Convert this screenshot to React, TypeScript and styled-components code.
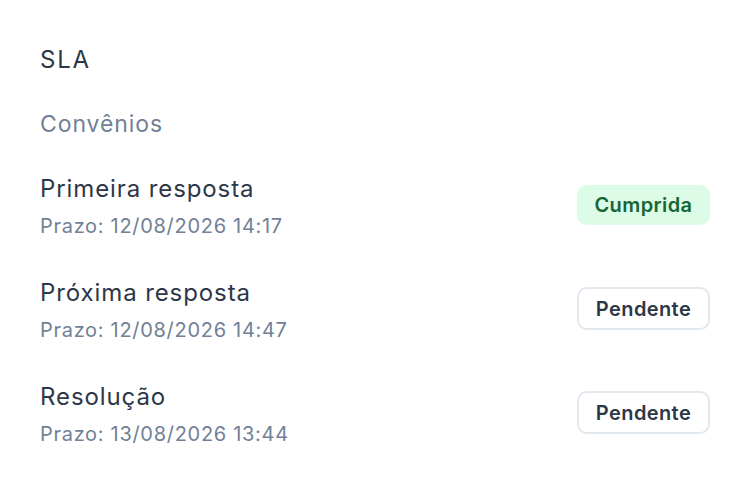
import React from 'react';
import styled, { createGlobalStyle } from 'styled-components';

const GlobalStyle = createGlobalStyle`
    html, body {
        margin: 0;
        padding: 0;
        background: #ffffff;
    }
    body {
        font-family: Inter, "Noto Sans", sans-serif;
        -webkit-font-smoothing: antialiased;
    }
`;

const Panel = styled.section`
    box-sizing: border-box;
    width: 750px;
    height: 504px;
    padding: 44px 40px 0 40px;
    background: #ffffff;
    display: flex;
    flex-direction: column;
`;

const Title = styled.h2`
    margin: 0;
    font-family: Inter, sans-serif;
    font-size: 24px;
    line-height: 32px;
    font-weight: 400;
    letter-spacing: 1.8px;
    color: #2d3748;
`;

const Group = styled.div`
    margin-top: 33px;
    font-family: Inter, sans-serif;
    font-size: 23px;
    line-height: 30px;
    letter-spacing: 0.9px;
    color: #718096;
`;

const List = styled.div`
    margin-top: 33px;
    display: flex;
    flex-direction: column;
    gap: 36px;
`;

const Row = styled.div`
    display: flex;
    align-items: center;
    justify-content: space-between;
`;

const Info = styled.div`
    display: flex;
    flex-direction: column;
    gap: 6px;
`;

const Name = styled.div`
    font-family: Inter, sans-serif;
    font-size: 24px;
    line-height: 34px;
    letter-spacing: 0.9px;
    color: #2d3748;
`;

const Deadline = styled.div`
    font-family: Inter, sans-serif;
    font-size: 20px;
    line-height: 28px;
    letter-spacing: 0.7px;
    color: #718096;
`;

const Badge = styled.span<{ $done?: boolean }>`
    box-sizing: border-box;
    display: inline-flex;
    align-items: center;
    justify-content: center;
    width: 133px;
    height: ${p => (p.$done ? '40px' : '43px')};
    margin-bottom: 3px;
    border-radius: 10px;
    font-family: Inter, sans-serif;
    font-size: 20px;
    font-weight: 600;
    letter-spacing: 0.4px;
    background: ${p => (p.$done ? '#dcfce7' : '#ffffff')};
    color: ${p => (p.$done ? '#166534' : '#2d3748')};
    border: ${p => (p.$done ? 'none' : '2px solid #e2e8f0')};
`;

const slas = [
    { name: 'Primeira resposta', prazo: '12/08/2026 14:17', done: true },
    { name: 'Próxima resposta', prazo: '12/08/2026 14:47', done: false },
    { name: 'Resolução', prazo: '13/08/2026 13:44', done: false },
];

const App: React.FC = () => {
    return (
        <>
            <GlobalStyle/>
            <Panel>
                <Title>SLA</Title>
                <Group>Convênios</Group>
                <List>
                    {slas.map(sla => (
                        <Row key={sla.name}>
                            <Info>
                                <Name>{sla.name}</Name>
                                <Deadline>Prazo: {sla.prazo}</Deadline>
                            </Info>
                            <Badge $done={sla.done}>{sla.done ? 'Cumprida' : 'Pendente'}</Badge>
                        </Row>
                    ))}
                </List>
            </Panel>
        </>
    );
}

export default App;
